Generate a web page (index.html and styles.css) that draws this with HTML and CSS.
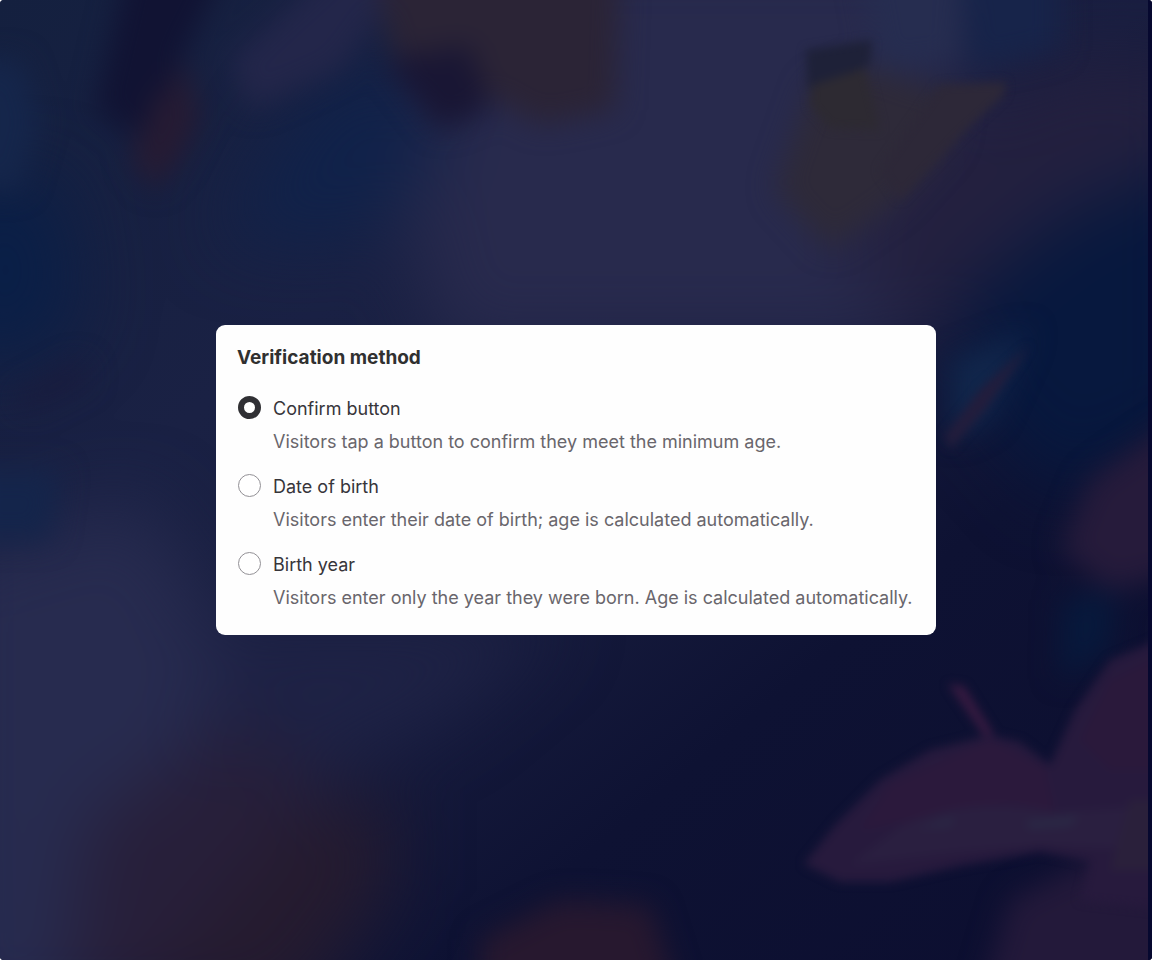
FILE: index.html
```html
<!DOCTYPE html>
<html lang="en">
<head>
<meta charset="utf-8">
<meta name="viewport" content="width=device-width, initial-scale=1">
<title>Verification method</title>
<link rel="stylesheet" href="styles.css">
</head>
<body>
<main class="scene">
  <svg class="backdrop" viewBox="0 0 1152 960" preserveAspectRatio="none" aria-hidden="true">
    <defs>
      <linearGradient id="base" x1="0" y1="0" x2="1" y2="1">
        <stop offset="0" stop-color="#14203f"/>
        <stop offset=".3" stop-color="#1a2144"/>
        <stop offset=".5" stop-color="#191e40"/>
        <stop offset=".7" stop-color="#0e1233"/>
        <stop offset="1" stop-color="#0c0e30"/>
      </linearGradient>
      <filter id="wide" x="-50%" y="-50%" width="200%" height="200%" color-interpolation-filters="sRGB"><feGaussianBlur stdDeviation="36"/></filter>
      <filter id="mid" x="-50%" y="-50%" width="200%" height="200%" color-interpolation-filters="sRGB"><feGaussianBlur stdDeviation="14"/></filter>
      <filter id="near" x="-50%" y="-50%" width="200%" height="200%" color-interpolation-filters="sRGB"><feGaussianBlur stdDeviation="5"/></filter>
    </defs>
    <rect width="1152" height="960" fill="url(#base)"/>
    <g filter="url(#wide)">
      <path d="M480 -60H980L960 120L900 350H440L400 180Z" fill="#282a4d"/>
      <path d="M-60 180H60L80 320L30 360H-60Z" fill="#0a1f47"/>
      <path d="M300 110L370 50L450 140L360 240H220Z" fill="#10224a"/>
      <path d="M-60 560L140 500L250 660L160 800L60 1020H-60Z" fill="#272b4f"/>
      <path d="M180 620H560L440 720L300 780Z" fill="#1e2245"/>
      <path d="M90 820L240 720L330 790L300 1020H60Z" fill="#271f3a"/>
      <path d="M280 830L390 790L390 890L290 1020H120Z" fill="#251b2f"/>
      <path d="M940 120L1060 60H1200V160L1000 280L930 350L840 240Z" fill="#23203f"/>
      <path d="M1200 160L1070 210L970 290L960 390L1060 500L1200 430Z" fill="#07183e"/>
    </g>
    <g filter="url(#mid)">
      <path d="M130 -40H230L180 60L140 140L95 110Z" fill="#111333"/>
      <path d="M185 60L200 120L180 160L155 190L130 160L150 110Z" fill="#261b33"/>
      <path d="M340 -40H420L340 70L250 110L230 60Z" fill="#23264a"/>
      <path d="M375 -40H620L615 110L540 125L480 90L390 50Z" fill="#2b2436"/>
      <path d="M385 60L470 45L490 110L440 130Z" fill="#191634"/>
      <path d="M860 -40H960V60L880 70Z" fill="#262d50"/>
      <path d="M960 -40H1060V50L970 70Z" fill="#17244a"/>
      <path d="M812 85L860 65L960 95L950 145L895 205L830 250L775 190Z" fill="#2e2a39"/>
      <path d="M-30 60H20L40 120L20 190H-30Z" fill="#15264b"/>
      <path d="M10 400L80 360L90 380L30 410Z" fill="#191b3d"/>
      <path d="M-30 470H60L50 540H-30Z" fill="#14254b"/>
      <path d="M950 360L1030 330L990 420L950 440Z" fill="#11264b"/>
      <path d="M480 940L560 900L650 905L680 1000H480Z" fill="#27182f"/>
      <path d="M1190 410L1090 480L1060 550L1110 590L1190 570Z" fill="#261b3b"/>
      <path d="M1062 600L1115 590L1110 650L1060 680Z" fill="#07193c"/>
      <path d="M1190 820L1070 870L1010 900L980 1000H1190Z" fill="#23193a"/>
    </g>
    <g filter="url(#near)">
      <path d="M806 50L872 40L870 65L808 90Z" fill="#1e2138"/>
      <path d="M812 85L865 68L880 130L830 128L810 105Z" fill="#2d2a32"/>
      <path d="M940 85L1006 82L1004 95L960 135L900 200L880 170Z" fill="#2d2838"/>
      <path d="M1030 345L980 390L945 435L950 450L985 410Z" fill="#231d3c"/>
      <path d="M948 684L964 686L994 734L984 736Z" fill="#361a40"/>
      <path d="M1170 635L1110 660L1075 710L1050 765L1020 742L990 735L930 750L880 780L835 825L804 864L840 882L890 882L960 866L1040 852L1090 862L1080 900L1170 910Z" fill="#271a3d"/>
      <path d="M990 740L1045 768L1055 812L1010 804L940 815L860 830L890 785Z" fill="#2b193c"/>
      <path d="M1170 650L1110 680L1080 740L1110 770H1170Z" fill="#2a193b"/>
      <path d="M900 826Q970 794 1055 812L1170 805V850L1040 846L960 852L850 865Z" fill="#2a1f40"/>
      <path d="M915 829L955 816L950 826ZM1025 821L1080 815L1070 826L1030 829Z" fill="#2a2845"/>
      <path d="M1130 800H1170V870H1110Z" fill="#2a203b"/>
    </g>
    <rect x="1148" width="4" height="960" fill="#06082f"/>
  </svg>

  <form class="card">
    <fieldset class="group">
      <legend class="title">Verification method</legend>
      <div class="options">
        <div class="option">
          <input class="radio" type="radio" name="method" id="confirm" aria-describedby="confirm-help" checked>
          <label class="label" for="confirm">Confirm button</label>
          <p class="help" id="confirm-help">Visitors tap a button to confirm they meet the minimum age.</p>
        </div>
        <div class="option">
          <input class="radio" type="radio" name="method" id="date" aria-describedby="date-help">
          <label class="label" for="date">Date of birth</label>
          <p class="help" id="date-help">Visitors enter their date of birth; age is calculated automatically.</p>
        </div>
        <div class="option">
          <input class="radio" type="radio" name="method" id="year" aria-describedby="year-help">
          <label class="label" for="year">Birth year</label>
          <p class="help" id="year-help">Visitors enter only the year they were born. Age is calculated automatically.</p>
        </div>
      </div>
    </fieldset>
  </form>
</main>
</body>
</html>
```
FILE: styles.css
```css
* {
  box-sizing: border-box;
}

body {
  margin: 0;
  background: #fff;
  font-family: Inter, "Liberation Sans", sans-serif;
  font-size: 18px;
  line-height: 26px;
  color: #303030;
}

.scene {
  position: relative;
  display: grid;
  place-items: center;
  min-height: 100vh;
  padding: 24px;
  overflow: hidden;
  border-radius: 4px;
  background: #14183a;
}

.backdrop {
  position: absolute;
  inset: 0;
  width: 100%;
  height: 100%;
}

.card {
  position: relative;
  width: 100%;
  max-width: 720px;
  padding: 20px 21px 24px;
  border-radius: 9px;
  background: #fefefe;
}

.group {
  min-width: 0;
  margin: 0;
  padding: 0;
  border: 0;
}

.title {
  padding: 0;
  font-size: 19px;
  font-weight: 700;
}

.options {
  display: grid;
  gap: 18px;
  padding-top: 24px;
}

.option {
  display: grid;
  grid-template-columns: 24px 1fr;
  column-gap: 12px;
  row-gap: 6px;
  align-items: start;
}

.radio {
  appearance: none;
  width: 23px;
  height: 23px;
  margin: 1px 0 0;
  justify-self: center;
  border: 1px solid #929095;
  border-radius: 50%;
  background: #fff;
}

.radio:checked {
  border: 6px solid #303034;
}

.label {
  line-height: 28px;
  color: #37353a;
}

.help {
  grid-column: 2;
  margin: 0;
  color: #69666c;
}
```
